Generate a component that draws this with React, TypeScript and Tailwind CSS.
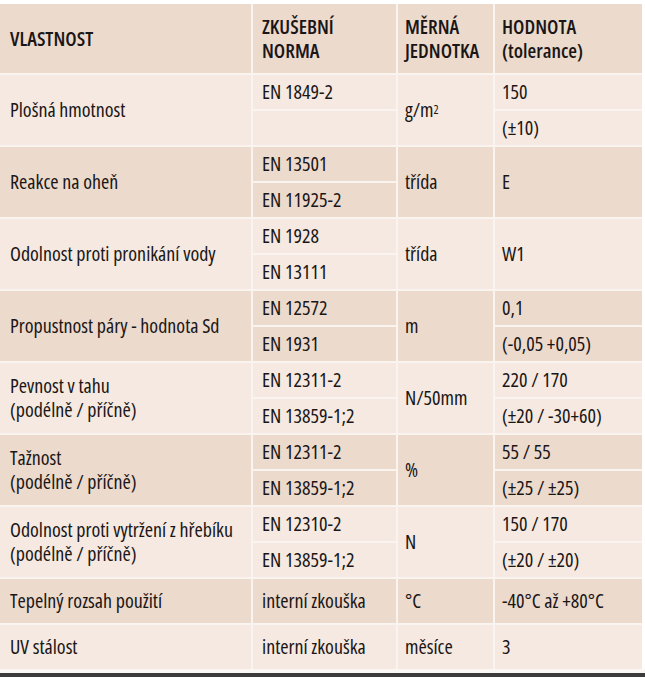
import React from "react";

const DARK = "bg-[#ecdacd]";
const LIGHT = "bg-[#f5e9e1]";
const B = "border-[#faf4f0]";

type Row = {
  label: React.ReactNode;
  norms: [string, string];
  unit: React.ReactNode;
  vals: [string, string] | string;
  dark: boolean;
};

const rows: Row[] = [
  { label: "Plošná hmotnost", norms: ["EN 1849-2", ""], unit: <span>g/m<sup className="text-[12px] relative -top-[3px]">2</sup></span>, vals: ["150", "(±10)"], dark: false },
  { label: "Reakce na oheň", norms: ["EN 13501", "EN 11925-2"], unit: "třída", vals: "E", dark: true },
  { label: "Odolnost proti pronikání vody", norms: ["EN 1928", "EN 13111"], unit: "třída", vals: "W1", dark: false },
  { label: "Propustnost páry - hodnota Sd", norms: ["EN 12572", "EN 1931"], unit: "m", vals: ["0,1", "(-0,05 +0,05)"], dark: true },
  { label: <>Pevnost v tahu<br />(podélně / příčně)</>, norms: ["EN 12311-2", "EN 13859-1;2"], unit: "N/50mm", vals: ["220 / 170", "(±20 / -30+60)"], dark: false },
  { label: <>Tažnost<br />(podélně / příčně)</>, norms: ["EN 12311-2", "EN 13859-1;2"], unit: "%", vals: ["55 / 55", "(±25 / ±25)"], dark: true },
  { label: <>Odolnost proti vytržení z hřebíku<br />(podélně / příčně)</>, norms: ["EN 12310-2", "EN 13859-1;2"], unit: "N", vals: ["150 / 170", "(±20 / ±20)"], dark: false },
];

const simpleRows = [
  { label: "Tepelný rozsah použití", norm: "interní zkouška", unit: "°C", val: "-40°C až +80°C", dark: true },
  { label: "UV stálost", norm: "interní zkouška", unit: "měsíce", val: "3", dark: false },
];

function SubCol({ items, w, pad }: { items: [string, string]; w: string; pad: string }) {
  return (
    <div className={`${w} flex flex-col border-l-2 ${B}`}>
      <div className={`flex-1 flex items-center ${pad} border-b-2 ${B}`}>{items[0]}</div>
      <div className={`flex-1 flex items-center ${pad}`}>{items[1]}</div>
    </div>
  );
}

export default function App() {
  return (
    <div className="w-[645px] h-[677px] bg-white flex flex-col text-[#1a1616] text-[20px] leading-[24px] font-['Open_Sans',sans-serif] font-stretch-[75%]">
      <div className="h-[4px]" />
      <div className="w-[642px] flex flex-col">
        <div className={`flex h-[69px] ${DARK} font-semibold`}>
          <div className="w-[251px] flex items-center pl-[10px]">VLASTNOST</div>
          <div className={`w-[145px] flex items-center pl-[9px] border-l-2 ${B}`}>ZKUŠEBNÍ<br />NORMA</div>
          <div className={`w-[97px] flex items-center pl-[7px] border-l-2 ${B}`}>MĚRNÁ<br />JEDNOTKA</div>
          <div className={`flex-1 flex items-center pl-[7px] border-l-2 ${B}`}>HODNOTA<br />(tolerance)</div>
        </div>
        {rows.map((r, i) => (
          <div key={i} className={`flex h-[72px] border-t-2 ${B} ${r.dark ? DARK : LIGHT}`}>
            <div className="w-[251px] flex items-center pl-[10px]">
              <div>{r.label}</div>
            </div>
            <SubCol items={r.norms} w="w-[145px]" pad="pl-[9px]" />
            <div className={`w-[97px] flex items-center pl-[7px] border-l-2 ${B}`}>{r.unit}</div>
            {typeof r.vals === "string" ? (
              <div className={`flex-1 flex items-center pl-[7px] border-l-2 ${B}`}>{r.vals}</div>
            ) : (
              <SubCol items={r.vals} w="flex-1" pad="pl-[7px]" />
            )}
          </div>
        ))}
        {simpleRows.map((r, i) => (
          <div key={i} className={`flex h-[46px] border-t-2 ${B} ${r.dark ? DARK : LIGHT}`}>
            <div className="w-[251px] flex items-center pl-[10px]">{r.label}</div>
            <div className={`w-[145px] flex items-center pl-[9px] border-l-2 ${B}`}>{r.norm}</div>
            <div className={`w-[97px] flex items-center pl-[7px] border-l-2 ${B}`}>{r.unit}</div>
            <div className={`flex-1 flex items-center pl-[7px] border-l-2 ${B}`}>{r.val}</div>
          </div>
        ))}
      </div>
      <div className="flex-1 bg-[#fbf7f4]" />
      <div className="h-[4px] bg-[#3c3c3c]" />
    </div>
  );
}
